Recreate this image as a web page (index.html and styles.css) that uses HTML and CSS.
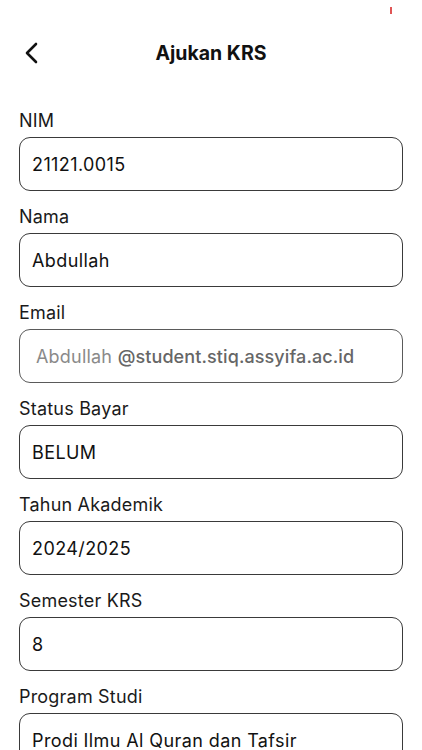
FILE: index.html
```html
<!DOCTYPE html>
<html lang="id">
<head>
<meta charset="UTF-8">
<meta name="viewport" content="width=device-width, initial-scale=1.0">
<title>Ajukan KRS</title>
<link rel="stylesheet" href="styles.css">
</head>
<body>

<div class="status-bar">
    <span class="status-dot"></span>
</div>

<div class="header">
    <button class="back-btn" aria-label="Kembali">
        <svg width="16" height="22" viewBox="0 0 16 22">
            <path d="M12 2 L3 11 L12 20" fill="none" stroke="#111" stroke-width="2.6" stroke-linecap="round" stroke-linejoin="round"/>
        </svg>
    </button>
    <h2>Ajukan KRS</h2>
</div>

<div class="form">
    <div class="field">
        <label>NIM</label>
        <div class="box">21121.0015</div>
    </div>
    <div class="field">
        <label>Nama</label>
        <div class="box">Abdullah</div>
    </div>
    <div class="field">
        <label>Email</label>
        <div class="box box-muted"><span><span class="email-name">Abdullah</span> <span class="email-domain">@student.stiq.assyifa.ac.id</span></span></div>
    </div>
    <div class="field">
        <label>Status Bayar</label>
        <div class="box">BELUM</div>
    </div>
    <div class="field">
        <label>Tahun Akademik</label>
        <div class="box">2024/2025</div>
    </div>
    <div class="field">
        <label>Semester KRS</label>
        <div class="box">8</div>
    </div>
    <div class="field">
        <label>Program Studi</label>
        <div class="box">Prodi Ilmu Al Quran dan Tafsir</div>
    </div>
</div>

</body>
</html>
```
FILE: styles.css
```css
body {
    font-family: Inter, "Noto Sans", sans-serif;
    margin: 0;
    padding: 0;
    background-color: #fff;
    color: #111;
    overflow: hidden;
}

.status-bar {
    height: 24px;
    display: flex;
    justify-content: flex-end;
    padding-right: 30px;
}

.status-dot {
    width: 2px;
    height: 7px;
    margin-top: 7px;
    background-color: #e05555;
}

.header {
    position: relative;
    height: 58px;
    display: flex;
    align-items: center;
    justify-content: center;
}

.header h2 {
    margin: 0;
    font-size: 19.5px;
    font-weight: 700;
}

.back-btn {
    position: absolute;
    left: 24px;
    top: 18px;
    background: none;
    border: none;
    padding: 0;
    cursor: pointer;
}

.form {
    padding: 28px 19px 0 19px;
}

.field {
    margin-bottom: 15px;
}

.field label {
    display: block;
    font-size: 18px;
    letter-spacing: 0.2px;
    line-height: 22px;
    color: #1a1a1a;
    margin-bottom: 5px;
}

.box {
    height: 54px;
    box-sizing: border-box;
    border: 1.5px solid #3a3a3a;
    border-radius: 11px;
    padding: 0 12px;
    display: flex;
    align-items: center;
    font-size: 18px;
    letter-spacing: 0.4px;
    color: #111;
}

.box-muted {
    border-color: #5a5a5a;
}

.email-name {
    color: #8a8a8a;
    padding-left: 4px;
    letter-spacing: 0.2px;
}

.email-domain {
    color: #666;
    font-weight: 500;
    letter-spacing: 0.1px;
}
```
